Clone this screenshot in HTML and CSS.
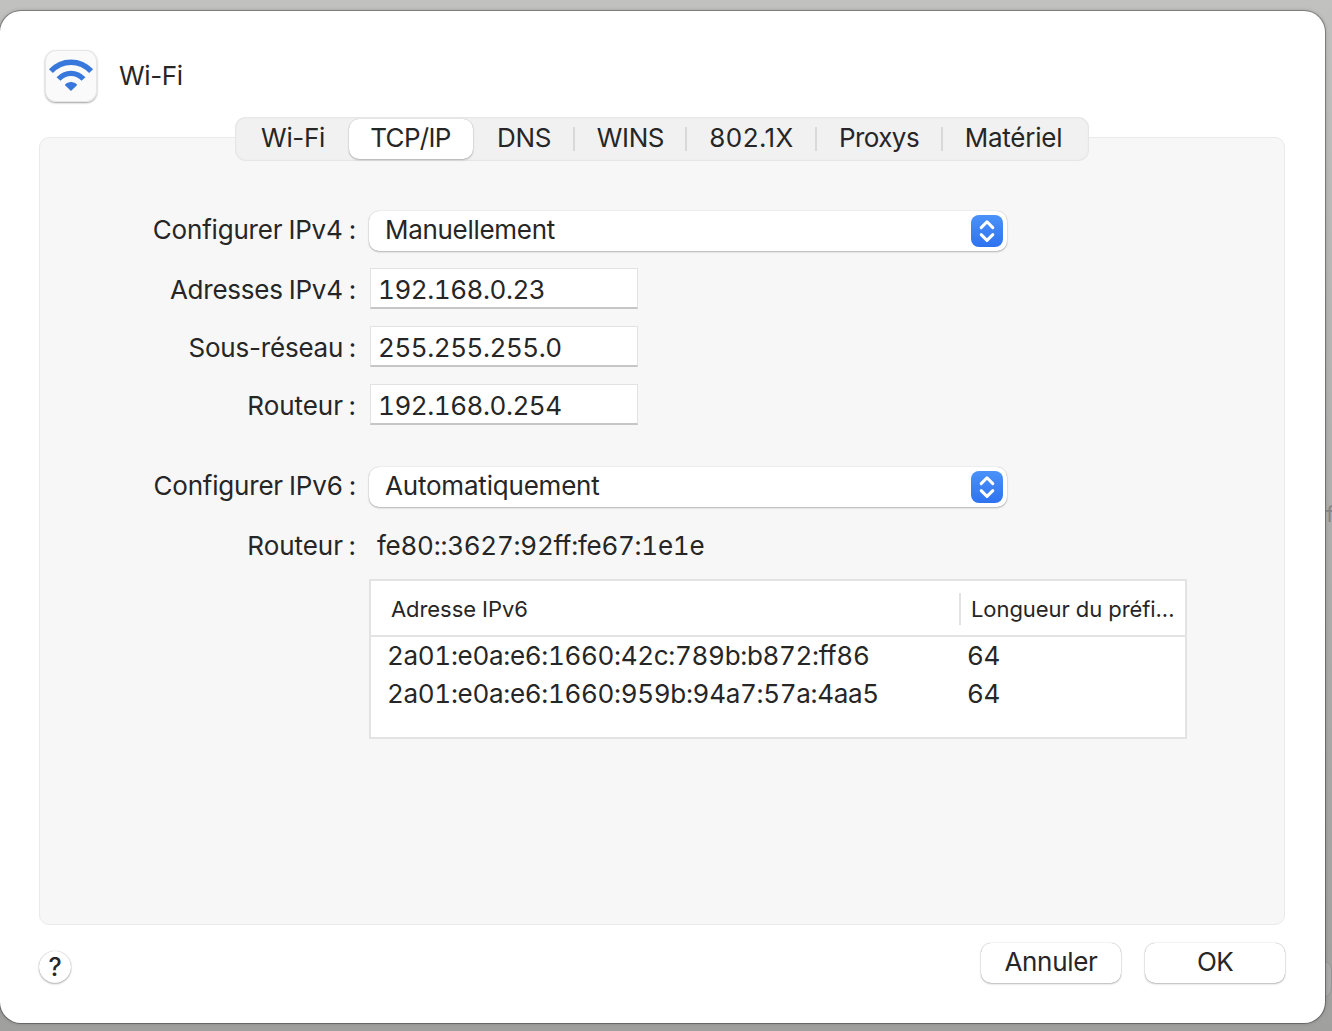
FILE: index.html
```html
<!DOCTYPE html>
<html lang="fr">
<head>
<meta charset="utf-8">
<title>Wi-Fi</title>
<link rel="stylesheet" href="styles.css">
</head>
<body>
<span class="behind-text">f</span>
<span class="behind-button"></span>
<main class="sheet">
  <header class="sheet-header">
    <span class="app-icon">
      <svg viewBox="0 0 52 52" width="52" height="52" fill="none" stroke="#3878dc">
        <path d="M5.9 21.2C17 9.2 35 9.2 46.1 21.2" stroke-width="5.5"/>
        <path d="M13.5 29.1C20.4 21.4 31.6 21.4 38.5 29.1" stroke-width="5.3"/>
        <path d="M26 41L19.8 34.9C23 31.1 29 31.1 32.2 34.9Z" fill="#3878dc" stroke="none"/>
      </svg>
    </span>
    <h1 class="title wifi">Wi-Fi</h1>
  </header>

  <nav class="tabs">
    <button class="tab wifi">Wi-Fi</button>
    <button class="tab selected">TCP/IP</button>
    <button class="tab dns">DNS</button>
    <button class="tab divided wins">WINS</button>
    <button class="tab divided dot1x">802.1X</button>
    <button class="tab divided proxys">Proxys</button>
    <button class="tab divided last">Matériel</button>
  </nav>

  <section class="panel">
    <div class="row popup-row">
      <span class="label">Configurer IPv4 :</span>
      <div class="popup"><span class="choice manual">Manuellement</span>
        <span class="stepper"><svg viewBox="0 0 32 32" width="32" height="32"><path d="M10.2 12.6L16 6.8L21.8 12.6M10.2 19.6L16 25.4L21.8 19.6"/></svg></span>
      </div>
    </div>
    <div class="row"><span class="label address">Adresses IPv4 :</span><div class="field">192.168.0.23</div></div>
    <div class="row"><span class="label subnet">Sous-réseau :</span><div class="field">255.255.255.0</div></div>
    <div class="row"><span class="label short">Routeur :</span><div class="field">192.168.0.254</div></div>
    <div class="row popup-row second">
      <span class="label">Configurer IPv6 :</span>
      <div class="popup"><span class="choice auto">Automatiquement</span>
        <span class="stepper"><svg viewBox="0 0 32 32" width="32" height="32"><path d="M10.2 12.6L16 6.8L21.8 12.6M10.2 19.6L16 25.4L21.8 19.6"/></svg></span>
      </div>
    </div>
    <div class="row router"><span class="label short">Routeur :</span><span class="value">fe80<span class="low-colons">::</span>3627:92ff:fe67:1e1e</span></div>
    <div class="table">
      <div class="thead"><span class="th">Adresse IPv6</span><span class="th prefix">Longueur du préfi...</span></div>
      <div class="tr"><span>2a01:e0a:e6:1660:42c:789b:b872:ff86</span><span>64</span></div>
      <div class="tr"><span>2a01:e0a:e6:1660:959b:94a7:57a:4aa5</span><span>64</span></div>
    </div>
  </section>

  <footer class="footer">
    <button class="help">?</button>
    <div class="actions">
      <button class="btn">Annuler</button>
      <button class="btn ok">OK</button>
    </div>
  </footer>
</main>
</body>
</html>
```
FILE: styles.css
```css
* { box-sizing: border-box; }
html, body { height: 100%; }
body {
  margin: 0;
  padding: 11px 7px 8px 0;
  overflow: hidden;
  position: relative;
  background: linear-gradient(#c1c1bf, #b0b0af 45%, #a0a09f);
  font: 26px/32px Inter, "Liberation Sans", sans-serif;
  color: #262626;
}
button { margin: 0; padding: 0; border: 0; background: none; font: inherit; color: inherit; }
.behind-text { position: absolute; left: 1326px; top: 498px; color: #858585; font-size: 22px; }
.behind-button {
  position: absolute; left: 1290px; top: 960px; width: 42px; height: 38px;
  border-radius: 10px; background: #aaaaaa; border: 1px solid #969696;
}
.sheet {
  position: relative;
  display: flex; flex-direction: column;
  height: 1012px;
  padding: 38px 40px 0 39px;
  border-radius: 21px;
  background: #fff;
  box-shadow: 0 0 0 1px rgba(0,0,0,.28), 0 0 4px rgba(0,0,0,.25);
}
.sheet-header { display: flex; align-items: center; gap: 22px; height: 53px; padding-left: 6px; }
.app-icon {
  width: 52px; height: 52px; border-radius: 11px; background: #fafafa;
  box-shadow: inset 0 0 0 1px #e6e6e6, 0 1px 2px rgba(0,0,0,.38);
}
.app-icon svg { display: block; }
.title { margin: 0; font: inherit; }
.wifi { letter-spacing: -.35px; }
.tabs {
  z-index: 1;
  display: grid;
  grid-template-columns: 114px 124px 100px 112px 130px 126px 148px;
  width: 854px; height: 44px;
  margin: 15px 0 0 196px;
  padding: 2px 0;
  border-radius: 11px;
  background: #f1f1f1;
  box-shadow: inset 0 0 0 1px #e6e6e6, inset 0 0 4px rgba(0,0,0,.03);
}
.tab { height: 38px; padding-left: 2px; }
.tab.divided { background: linear-gradient(#d9d9d9, #d9d9d9) 0 8px / 2px 24px no-repeat; padding-left: 3px; }
.tab.last { padding: 0 3px 0 0; letter-spacing: -.25px; }
.tab.selected {
  height: 40px; padding: 0 1px 2px 0; border-radius: 10px; background: #fff; letter-spacing: -.7px;
  box-shadow: 0 0 1px rgba(0,0,0,.25), 0 1px 2px rgba(0,0,0,.25);
}
.dns { letter-spacing: -.4px; }
.wins { letter-spacing: -.4px; }
.dot1x { letter-spacing: .4px; }
.tab.proxys { letter-spacing: -.55px; padding-left: 2px; }
.panel {
  height: 788px;
  margin-top: -24px;
  padding-top: 72px;
  border: 1px solid #eaeaea;
  border-radius: 10px;
  background: #f7f7f7;
}
.row { display: grid; grid-template-columns: 318px 1fr; height: 41px; margin-bottom: 17px; column-gap: 12px; align-items: center; }
.label {
  text-align: right; padding: 2px 2px 0 0;
  letter-spacing: -.2px; word-spacing: -1px;
  font-feature-settings: "calt" 0;
}
.address { letter-spacing: -.25px; }
.subnet { word-spacing: -1.6px; }
.short { letter-spacing: -.05px; word-spacing: -1.6px; }
.popup-row { grid-template-columns: 318px 638px; column-gap: 11px; align-items: start; }
.popup-row .label { padding-top: 4px; }
.popup {
  display: flex; align-items: center; justify-content: space-between;
  height: 40px; margin-top: 1px; padding: 0 4px 0 16px;
  border-radius: 10px; background: #fff;
  box-shadow: 0 0 1px rgba(0,0,0,.28), 0 1px 2px rgba(0,0,0,.25);
}
.choice { margin-top: -3px; }
.manual { letter-spacing: -.3px; }
.auto { letter-spacing: -.2px; }
.stepper { width: 32px; height: 32px; border-radius: 8px; background: linear-gradient(#4a92f9, #2f72f0); }
.stepper svg { display: block; fill: none; stroke: #fff; stroke-width: 3; stroke-linecap: round; stroke-linejoin: round; }
.field {
  width: 268px; height: 41px; padding: 5px 0 0 7px;
  background: #fff; border: 1px solid #e2e2e2; border-bottom: 2px solid #c6c6c6;
  letter-spacing: -.45px;
}
.field, .value, .tr { font-variant-numeric: tabular-nums; }
.second { margin-top: 41px; }
.router { height: 32px; margin: 23px 0 17px; }
.router .label { padding-top: 0; }
.value { padding-left: 7px; letter-spacing: -.26px; }
.low-colons { font-feature-settings: "calt" 0; }
.table { width: 818px; height: 160px; margin-left: 329px; border: 2px solid #e3e3e3; background: #fff; }
.thead { display: flex; align-items: center; height: 56px; border-bottom: 2px solid #e3e3e3; font-size: 22px; letter-spacing: -.07px; }
.th { width: 588px; padding-left: 20px; padding-top: 2px; }
.prefix { width: auto; height: 32px; margin-top: 2px; padding: 0 0 0 10px; border-left: 2px solid #e3e3e3; }
.tr { display: grid; grid-template-columns: 580px 1fr; padding: 3px 0 3px 16px; letter-spacing: -.32px; }
.footer { display: flex; justify-content: space-between; align-items: flex-start; margin-top: 17px; }
.help {
  width: 32px; height: 32px; margin-top: 9px; border-radius: 50%; background: #fff; font-size: 25px; font-weight: 500; line-height: 33px;
  box-shadow: 0 0 1px rgba(0,0,0,.35), 0 1px 2px rgba(0,0,0,.3);
}
.actions { display: flex; gap: 24px; padding-top: 1px; }
.btn {
  width: 140px; height: 40px; padding-bottom: 3px; border-radius: 10px; background: #fff; letter-spacing: -.3px;
  box-shadow: 0 0 1px rgba(0,0,0,.4), 0 1px 2px rgba(0,0,0,.25);
}
.ok { letter-spacing: -.6px; }
```
